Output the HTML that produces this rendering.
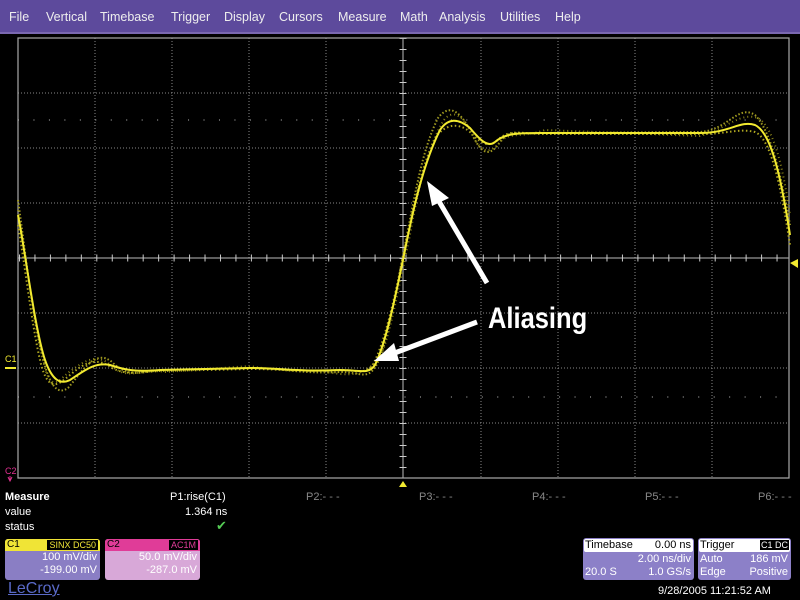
<!DOCTYPE html>
<html><head><meta charset="utf-8"><style>
*{margin:0;padding:0;box-sizing:border-box}
body{width:800px;height:600px;background:#000;overflow:hidden;position:relative;font-family:"Liberation Sans",sans-serif;color:#fff}
#menu{position:absolute;left:0;top:0;width:800px;height:34px;background:#5d4a9c;border-bottom:2px solid #7a68b0}
#menu span{position:absolute;top:10px;font-size:12.5px;color:#eee}
.t{position:absolute;font-size:11px;white-space:nowrap}
.box{position:absolute;background:#8c80c8;border-radius:3px;font-size:11px;color:#fff}
</style></head><body>
<div id="menu">
<span style="left:9px">File</span><span style="left:46px">Vertical</span><span style="left:100px">Timebase</span><span style="left:171px">Trigger</span><span style="left:224px">Display</span><span style="left:279px">Cursors</span><span style="left:338px">Measure</span><span style="left:400px">Math</span><span style="left:439px">Analysis</span><span style="left:500px">Utilities</span><span style="left:555px">Help</span>
</div>
<svg width="800" height="600" style="position:absolute;left:0;top:0">
<g stroke="#888" stroke-width="1" stroke-dasharray="1 2" fill="none">
<path d="M95,38V478M172,38V478M249,38V478M326,38V478M481,38V478M558,38V478M635,38V478M712,38V478"/>
<path d="M18,93H789M18,148H789M18,203H789M18,313H789M18,368H789M18,423H789"/>
</g>
<g stroke="#999" stroke-width="1.2" stroke-dasharray="1 14.46" fill="none">
<path d="M18,120H789M18,397H789"/>
</g>
<path d="M403,38V478M18,258H789" stroke="#bbb" stroke-width="1"/>
<path d="M18,258H789" stroke="#ccc" stroke-width="7" stroke-dasharray="1 14.46" stroke-dashoffset="-1"/>
<path d="M403,38V478" stroke="#ccc" stroke-width="7" stroke-dasharray="1 10" />
<rect x="18" y="38" width="771" height="440" fill="none" stroke="#aaa" stroke-width="1.2"/>
<g fill="none" stroke-linejoin="round">
<path d="M18,200 C25,250 33,320 42,355 C50,388 58,395 68,388 C82,372 95,348 112,362 C128,378 140,372 160,370 L250,368 C280,368 300,374 340,372 C362,372 368,382 378,362 C388,340 396,290 405,245 C415,195 422,150 438,118 C448,105 458,108 470,130 C480,152 488,160 500,142 C510,128 520,135 540,133 L700,132 C728,130 738,104 755,115 C770,130 780,170 790,225" stroke="#a09a20" stroke-width="2" stroke-dasharray="1.5 2"/>
<path d="M18,225 C25,265 33,335 42,368 C50,392 58,385 70,375 C82,365 95,355 112,368 C128,376 140,372 160,371 L250,369 C280,369 300,372 340,370 C358,370 362,375 372,366 C382,350 392,310 402,262 C412,215 420,170 435,138 C445,124 458,122 470,132 C480,142 488,150 500,138 C510,130 520,133 540,134 L700,134 C728,134 738,128 755,132 C770,138 780,180 790,245" stroke="#b0a820" stroke-width="2" stroke-dasharray="1.5 2.5"/>
<path d="M18,210 C26,260 36,335 46,372 C54,392 60,378 72,370 C86,360 98,352 114,368 C130,380 142,368 165,372 L250,366 C280,372 300,368 340,374 C362,376 370,368 380,358 C390,335 398,290 409,240 C418,190 428,145 444,120 C452,110 462,112 474,138 C484,156 492,152 502,140 C512,132 522,138 545,130 L700,136 C728,128 740,112 758,118 C772,126 782,160 790,215" stroke="#8a8418" stroke-width="2" stroke-dasharray="1 3"/>
<path d="M18,215 C25,250 35,330 45,360 C52,380 60,385 70,380 C85,370 95,362 110,365 C125,370 135,372 160,370 L250,368 C280,368 300,372 340,370 C360,370 368,375 375,365 C385,345 395,300 405,250 C415,200 425,160 440,130 C448,118 458,118 470,128 C480,140 488,148 495,142 C505,133 520,133 540,133 L700,133 C730,133 740,120 755,125 C770,132 780,170 790,235" stroke="#f2ea30" stroke-width="2"/>
</g>
<g fill="#fff" stroke="#fff">
<path d="M487,283 L437,198" stroke-width="5"/>
<polygon points="427,181 449,198 432,206" stroke="none"/>
<path d="M477,322 L392,354" stroke-width="5"/>
<polygon points="374,361 394,343 399,361" stroke="none"/>
</g>
<text transform="translate(488,328) scale(0.85,1)" font-family="Liberation Sans, sans-serif" font-weight="bold" font-size="30" fill="#fff">Aliasing</text>
<polygon points="790,263 798,259 798,268" fill="#f2ea30"/>
<polygon points="399,487 403,481 407,487" fill="#f2ea30"/>
<text x="5" y="362" font-size="9" fill="#f2ea30">C1</text>
<rect x="5" y="367" width="11" height="2" fill="#f2ea30"/>
<text x="5" y="474" font-size="9" fill="#e03090">C2</text>
<path d="M8,477 l2,4 l2,-4M10,476v5" stroke="#e03090" fill="none"/>
</svg>
<div class="t" style="left:5px;top:491px;font-weight:bold">Measure</div>
<div class="t" style="left:5px;top:506px">value</div>
<div class="t" style="left:5px;top:521px">status</div>
<div class="t" style="left:170px;top:491px">P1:rise(C1)</div>
<div class="t" style="left:185px;top:506px">1.364 ns</div>
<div class="t" style="left:216px;top:518px;color:#5c5;font-size:13px">✔</div>
<div class="t" style="left:306px;top:491px;color:#888">P2:- - -</div>
<div class="t" style="left:419px;top:491px;color:#888">P3:- - -</div>
<div class="t" style="left:532px;top:491px;color:#888">P4:- - -</div>
<div class="t" style="left:645px;top:491px;color:#888">P5:- - -</div>
<div class="t" style="left:758px;top:491px;color:#888">P6:- - -</div>
<div class="box" style="left:5px;top:539px;width:95px;height:41px;background:#8a7ec4">
<div style="background:#f0e436;height:12px;border-radius:3px 3px 0 0;color:#000;font-size:10px;position:relative"><span style="position:absolute;left:2px;top:0">C1</span><span style="position:absolute;right:2px;top:1px;background:#000;color:#f0e436;font-size:9px;padding:0 2px;line-height:10px">SINX DC50</span></div>
<div style="text-align:right;padding-right:3px;line-height:13px">100 mV/div<br>-199.00 mV</div></div>
<div class="box" style="left:105px;top:539px;width:95px;height:41px;background:#d8a8d8">
<div style="background:#e03c98;height:12px;border-radius:3px 3px 0 0;color:#000;font-size:10px;position:relative"><span style="position:absolute;left:2px;top:0">C2</span><span style="position:absolute;right:2px;top:1px;background:#000;color:#e03c98;font-size:9px;padding:0 2px;line-height:10px">AC1M</span></div>
<div style="text-align:right;padding-right:3px;line-height:13px">50.0 mV/div<br>-287.0 mV</div></div>
<div class="t" style="left:8px;top:580px;font-size:16px;color:#5a6ac8;text-decoration:underline">LeCroy</div>
<div class="box" style="left:583px;top:538px;width:111px;height:42px">
<div style="background:#fff;color:#000;height:13px;margin:1px;border-radius:2px;position:relative"><span style="position:absolute;left:1px">Timebase</span><span style="position:absolute;right:2px">0.00 ns</span></div>
<div style="position:relative;height:28px;line-height:13px"><span style="position:absolute;right:3px;top:0">2.00 ns/div</span><span style="position:absolute;left:2px;top:13px">20.0 S</span><span style="position:absolute;right:3px;top:13px">1.0 GS/s</span></div></div>
<div class="box" style="left:698px;top:538px;width:93px;height:42px">
<div style="background:#fff;color:#000;height:13px;margin:1px;border-radius:2px;position:relative"><span style="position:absolute;left:1px">Trigger</span><span style="position:absolute;right:1px;top:1px;background:#000;color:#fff;font-size:9px;line-height:10px;padding:0 1px">C1 DC</span></div>
<div style="position:relative;height:28px;line-height:13px"><span style="position:absolute;left:2px;top:0">Auto</span><span style="position:absolute;right:3px;top:0">186 mV</span><span style="position:absolute;left:2px;top:13px">Edge</span><span style="position:absolute;right:3px;top:13px">Positive</span></div></div>
<div class="t" style="left:658px;top:585px;font-size:11px">9/28/2005 11:21:52 AM</div>
</body></html>
